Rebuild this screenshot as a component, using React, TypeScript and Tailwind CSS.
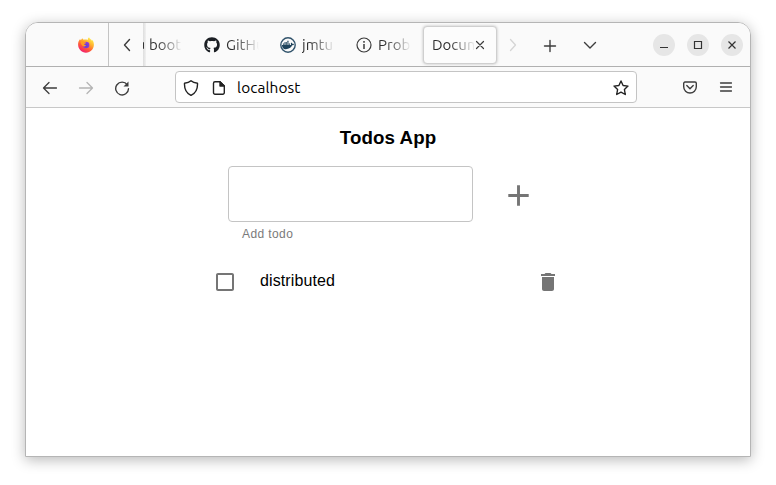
import React from 'react';
import { FaDocker, FaGithub } from 'react-icons/fa';

const uiFont = "font-['Ubuntu','Noto_Sans',sans-serif]";

function FirefoxLogo() {
  return (
    <svg width="16" height="16" viewBox="0 0 16 16">
      <defs>
        <linearGradient id="flame" x1="0.85" y1="0.05" x2="0.25" y2="1">
          <stop offset="0" stopColor="#fff44f" />
          <stop offset="0.35" stopColor="#ffb02e" />
          <stop offset="0.65" stopColor="#ff5a36" />
          <stop offset="1" stopColor="#f0147a" />
        </linearGradient>
        <radialGradient id="globe" cx="0.5" cy="0.6" r="0.6">
          <stop offset="0" stopColor="#5a3fd0" />
          <stop offset="1" stopColor="#9b3be0" />
        </radialGradient>
      </defs>
      <path
        d="M11 .2c-.9.8-1.3 1.7-1.4 2.7C8.400 2.400 7 2.300 5.700 2.800 5 2.300 4.500 1.800 4.300 1.200 3.600 1.800 3.200 2.500 3 3.300 2.500 3 2.200 2.500 2.100 2 .8 3.500.1 5.400.1 7.600c0 4.500 3.500 8.100 7.900 8.100s7.900-3.500 7.900-7.900c0-2.400-.9-4.300-2.100-5.300.2.600.2 1 .2 1.300C13.100 2.200 11.500 1.600 11 .2z"
        fill="url(#flame)"
      />
      <circle cx="8.100" cy="8" r="3.300" fill="url(#globe)" />
      <path d="M2.600 4.300C4 3.700 5.600 4 6.300 5.200c.8 0 1.700.1 1.700.6 0 .7-1.600 1-1.900 1.700.2.800 1.500.9 2.300.5-.4 1.500-2.900 2-4.200.6C3 7.400 2.700 6 2.600 4.300z" fill="#ff9c22" />
    </svg>
  );
}

function InfoIcon() {
  return (
    <svg className="shrink-0" width="16" height="16" viewBox="0 0 16 16" fill="none" stroke="#3b3b3b">
      <circle cx="8" cy="8" r="7" strokeWidth="1.200" />
      <path d="M8 7v5" strokeWidth="1.500" />
      <path d="M8 4v1.700" strokeWidth="1.500" />
    </svg>
  );
}

function DockerBadge() {
  return (
    <span className="relative flex size-4 shrink-0 items-center justify-center">
      <svg className="absolute inset-0" width="16" height="16" viewBox="0 0 16 16" fill="none">
        <circle cx="8" cy="8" r="7.200" stroke="#32546c" strokeWidth="1.400" />
      </svg>
      <FaDocker className="shrink-0" size={12} color="#1f435b" />
    </span>
  );
}

function Tab({ icon, label }: { icon: React.ReactNode; label: string }) {
  return (
    <div className="flex w-[76px] shrink-0 items-center gap-[6px] pl-[9px]">
      {icon}
      <FadedLabel text={label} />
    </div>
  );
}

function FadedLabel({ text }: { text: string }) {
  return (
    <span className="block w-[33px] overflow-hidden bg-linear-to-r from-[#2e2e2e] from-20% via-[#808080] via-60% to-[#fafafa] bg-clip-text text-[15px] leading-5 whitespace-nowrap text-transparent">
      {text}
    </span>
  );
}

function Stroke({ d, size = 16, color = '#3d3d3d', width = 1.3 }: { d: string; size?: number; color?: string; width?: number }) {
  return (
    <svg
      className="shrink-0"
      width={size}
      height={size}
      viewBox={`0 0 ${size} ${size}`}
      fill="none"
      stroke={color}
      strokeWidth={width}
      strokeLinecap="round"
      strokeLinejoin="round"
    >
      <path d={d} />
    </svg>
  );
}

function WindowButton({ d }: { d: string }) {
  return (
    <span className="flex size-[22px] items-center justify-center rounded-full bg-[#e6e6e6]">
      <svg width="22" height="22" viewBox="0 0 22 22" fill="none" stroke="#333333" strokeWidth="1.200">
        <path d={d} />
      </svg>
    </span>
  );
}

function TabStrip() {
  return (
    <div className="flex h-11 shrink-0 border-b border-[#b0b0b0] bg-[#fafafa]">
      <div className="flex w-[83px] shrink-0 items-center justify-end border-r border-[#c4c4c4] pt-px pr-[14px]">
        <FirefoxLogo />
      </div>
      <div className="flex w-[34px] shrink-0 items-center justify-center pt-px pl-px">
        <Stroke d="M10.500 2.500 5.500 8l5 5.500" width={1.400} />
      </div>
      <div className="flex w-[280px] shrink-0 items-stretch overflow-hidden pt-px">
        <div className="flex w-[52px] shrink-0 items-center gap-[3px]">
          <span className="-mt-px flex h-11 w-[3px] items-center self-start bg-linear-to-r from-[#dddddd] to-[#f1f1f1]">
            <span className="h-[7px] w-px rounded-r-full bg-[#333333]" />
          </span>
          <FadedLabel text="boot" />
        </div>
        <Tab icon={<FaGithub className="shrink-0" size={16} color="#1b1f24" />} label="GitHu" />
        <Tab icon={<DockerBadge />} label="jmtu" />
        <Tab icon={<InfoIcon />} label="Prob" />
      </div>
      <div className="mt-[3px] flex h-[38px] w-[74px] shrink-0 items-center rounded-[4px] border border-[#cfcfcf] bg-[#fcfcfc] pl-2 shadow-[0_0_3px_rgba(0,0,0,0.25)]">
        <span className="block w-[42px] overflow-hidden bg-linear-to-r from-[#2c2c2c] from-40% to-[#eeeeee] bg-clip-text text-[15px] leading-5 whitespace-nowrap text-transparent">
          Docum
        </span>
        <span className="ml-px">
          <Stroke d="m1.500 1.500 7 7m0-7-7 7" size={10} width={1.200} />
        </span>
      </div>
      <div className="flex w-8 shrink-0 items-center justify-center pt-px">
        <Stroke d="m5.500 2.500 5 5.500-5 5.500" color="#d5d5d5" />
      </div>
      <div className="flex w-[41px] shrink-0 items-center justify-center pt-0.5">
        <Stroke d="M8 2.500v11M2.500 8h11" width={1.400} />
      </div>
      <div className="flex w-10 shrink-0 items-center justify-center pt-px">
        <Stroke d="m2.500 5.500 5.500 5.500 5.500-5.500" width={1.400} />
      </div>
      <div className="ml-auto flex items-center gap-3 pt-px pr-[7px]">
        <WindowButton d="M7 13.500h8" />
        <WindowButton d="M7.500 7.500h7v7h-7z" />
        <WindowButton d="m7.500 7.500 7 7m0-7-7 7" />
      </div>
    </div>
  );
}

function Toolbar() {
  return (
    <div className="flex h-[41px] shrink-0 items-center border-b border-[#c8c8c8] bg-[#fafafa]">
      <div className="flex w-[149px] shrink-0 items-center gap-5 pt-px pl-4">
        <Stroke d="M14.500 8H1.500M7 2.500 1.500 8 7 13.500" />
        <Stroke d="M1.500 8h13M9 2.500 14.500 8 9 13.500" color="#b4b4b4" />
        <svg width="16" height="16" viewBox="0 0 16 16" fill="none" stroke="#3d3d3d" strokeWidth="1.400" strokeLinecap="round">
          <path d="M13.300 4.800A6.400 6.400 0 1 0 14.500 8.700" />
          <path d="M14.500 1.500v5h-5z" fill="#3d3d3d" stroke="none" />
        </svg>
      </div>
      <div className="flex h-8 w-[462px] shrink-0 items-center rounded-[4px] border border-[#c4c4c4] bg-white px-[7px] pt-px">
        <Stroke d="M8 .8C6.500 2.200 4 3 1.500 3.200c-.3 6 1.800 10 6.500 12.200 4.700-2.200 6.800-6.200 6.500-12.200C12 3 9.500 2.200 8 .8z" color="#222222" width={1.400} />
        <svg className="ml-3" width="16" height="16" viewBox="0 0 16 16" fill="none" stroke="#222222" strokeWidth="1.400" strokeLinejoin="round">
          <path d="M4 1.700h5l4.300 4.300v6.800a1.500 1.500 0 0 1-1.500 1.500H4a1.500 1.500 0 0 1-1.500-1.500V3.200A1.500 1.500 0 0 1 4 1.700z" />
          <path d="M9 1.700V6h4.300z" fill="#222222" />
        </svg>
        <span className="ml-[10px] pt-px text-[15.400px] leading-5 tracking-[0.100px] text-black">localhost</span>
        <span className="ml-auto">
          <Stroke d="m8 1 2.100 4.500 4.900.6-3.600 3.400.9 5L8 12.100l-4.300 2.400.9-5L1 6.100l4.900-.6z" color="#222222" width={1.400} />
        </span>
      </div>
      <div className="ml-auto flex items-center gap-5 pt-px pr-4">
        <Stroke d="M3 2h10a1.300 1.300 0 0 1 1.300 1.300v3.400a6.300 6.300 0 0 1-12.600 0V3.300A1.300 1.300 0 0 1 3 2zM4.800 5.500 8 8.700 11.200 5.500" width={1.400} />
        <Stroke d="M2.500 3h11M2.500 7h11M2.500 11h11" />
      </div>
    </div>
  );
}

function TodoPage() {
  return (
    <main className="flex grow flex-col bg-white font-['Liberation_Sans',sans-serif] text-black">
      <h3 className="mt-[19px] text-center text-[18.720px] leading-[22px] font-bold tracking-[0.100px]">Todos App</h3>
      <div className="mt-[17px] flex pl-[202px]">
        <div className="w-[245px]">
          <div className="h-14 rounded-[4px] border border-[#c4c4c4]" />
          <p className="mt-[2px] ml-[14px] text-[12px] leading-5 tracking-[0.400px] text-[#7a7a7a]">Add todo</p>
        </div>
        <svg className="mt-3 ml-7" width="35" height="35" viewBox="0 0 24 24" fill="#757575">
          <path d="M19 13h-6v6h-2v-6H5v-2h6V5h2v6h6z" />
        </svg>
      </div>
      <div className="mt-[26px] flex h-6 items-center pl-[187px]">
        <svg width="24" height="24" viewBox="0 0 24 24" fill="#757575">
          <path d="M19 5v14H5V5h14m0-2H5c-1.100 0-2 .9-2 2v14c0 1.100.9 2 2 2h14c1.100 0 2-.9 2-2V5c0-1.100-.9-2-2-2z" />
        </svg>
        <span className="ml-[23px] w-[276px] pb-[3px] text-base leading-6 tracking-[0.110px] text-black">distributed</span>
        <svg width="24" height="24" viewBox="0 0 24 24" fill="#757575">
          <path d="M6 19c0 1.100.9 2 2 2h8c1.100 0 2-.9 2-2V7H6v12zM19 4h-3.500l-1-1h-5l-1 1H5v2h14V4z" />
        </svg>
      </div>
    </main>
  );
}

export default function App() {
  return (
    <div className={`h-[485px] w-[776px] overflow-hidden bg-white pt-[22px] pl-[25px] ${uiFont}`}>
      <div className="flex h-[435px] w-[726px] flex-col overflow-hidden rounded-t-[13px] border border-[#b5b5b5] shadow-[0_3px_14px_rgba(0,0,0,0.28)]">
        <TabStrip />
        <Toolbar />
        <TodoPage />
      </div>
    </div>
  );
}
